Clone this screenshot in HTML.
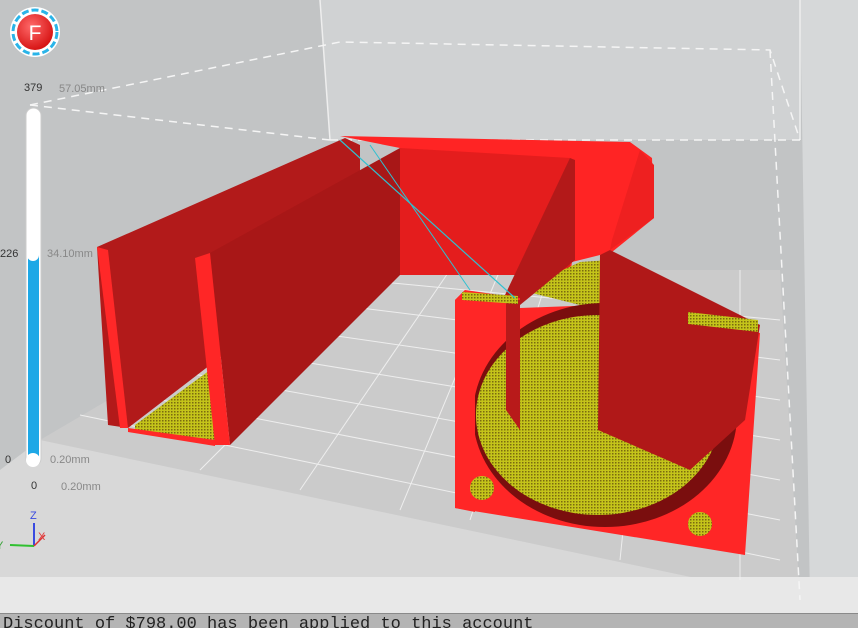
<!DOCTYPE html>
<html><head><meta charset="utf-8"><style>
html,body{margin:0;padding:0;width:858px;height:627px;overflow:hidden;background:#c2c4c5;font-family:"Liberation Sans",sans-serif}
svg{position:absolute;left:0;top:0}
.status{position:absolute;left:0;top:613px;width:858px;height:14px;background:#b4b4b4;border-top:1px solid #8a8a8a;font-family:"Liberation Mono",monospace;font-size:17px;line-height:22px;color:#222;padding-left:3px;overflow:hidden;white-space:nowrap}
.lbl{position:absolute;font-size:11px;color:#333}
.lbl2{position:absolute;font-size:11px;color:#888}
</style></head><body>
<svg width="858" height="627" viewBox="0 0 858 627">
<defs>
<radialGradient id="rg" cx="0.4" cy="0.35" r="0.7"><stop offset="0" stop-color="#ff6a6a"/><stop offset="1" stop-color="#d40e0e"/></radialGradient>
<pattern id="ye" width="3" height="3" patternUnits="userSpaceOnUse"><rect width="3" height="3" fill="#c4c41a"/><rect width="1.5" height="1.5" fill="#7a6a10"/></pattern>
</defs>
<!-- back room -->
<rect x="0" y="0" width="858" height="627" fill="#c2c4c5"/>
<polygon points="320,0 800,0 800,140 330,140" fill="#d0d2d3"/>
<polygon points="800,0 858,0 858,610 810,600" fill="#d6d8d9"/>
<line x1="320" y1="0" x2="330" y2="140" stroke="#eee" stroke-width="1.5"/>
<line x1="800" y1="0" x2="800" y2="140" stroke="#eee" stroke-width="1.5"/>
<!-- bed -->
<polygon points="40,440 330,270 780,270 800,600 0,590 0,470" fill="#cbcbcb"/>
<polygon points="0,470 40,440 800,600 810,600 0,600" fill="#d8d8d8"/>
<rect x="0" y="577" width="858" height="36" fill="#e8e8e8"/>
<g stroke="#f2f2f2" stroke-width="1" opacity="0.9">
<line x1="80" y1="415" x2="780" y2="560"/><line x1="120" y1="392" x2="780" y2="520"/><line x1="160" y1="368" x2="780" y2="480"/><line x1="200" y1="345" x2="780" y2="440"/><line x1="240" y1="322" x2="780" y2="400"/><line x1="280" y1="298" x2="780" y2="360"/><line x1="320" y1="276" x2="780" y2="320"/>
<line x1="200" y1="470" x2="400" y2="270"/><line x1="300" y1="490" x2="450" y2="270"/><line x1="400" y1="510" x2="500" y2="270"/><line x1="470" y1="520" x2="550" y2="270"/><line x1="620" y1="560" x2="650" y2="270"/><line x1="740" y1="580" x2="740" y2="270"/>
</g>
<g fill="none" stroke="#f5f5f5" stroke-width="1.5" stroke-dasharray="8,6">
<polyline points="30,105 340,42 770,50 800,140"/>
<polyline points="30,105 330,140"/>
<polyline points="770,50 800,600"/>
<polyline points="330,140 800,140"/>
</g>
<!-- left part -->
<polygon points="97,247 345,138 360,145 360,250 128,428 108,425" fill="#b21a1a"/>
<polygon points="97,247 108,250 128,428 120,428" fill="#ff2828"/>
<polygon points="135,425 210,370 215,440 135,430" fill="url(#ye)"/>
<polygon points="128,428 215,440 215,446 128,432" fill="#ff2828"/>
<polygon points="210,253 400,148 400,275 230,445" fill="#a81717"/>
<polygon points="195,258 210,253 230,445 215,445" fill="#ff2626"/>
<!-- back wall -->
<polygon points="340,136 630,142 652,158 654,218 612,252 572,262 570,275 400,275 400,148" fill="#ff2424"/>
<polygon points="400,148 570,158 570,275 400,275" fill="#e41d1d"/>
<polygon points="610,250 654,218 654,165 640,150 612,240" fill="#ee2020"/>
<!-- right part back floor -->
<polygon points="520,290 580,262 610,260 760,325 600,310" fill="url(#ye)"/>
<!-- divider -->
<polygon points="505,295 570,158 575,160 575,260 520,305" fill="#b31919"/>
<!-- front box -->
<polygon points="455,300 465,290 520,298 520,308 600,305 760,333 745,555 455,508" fill="#ff2626"/>
<ellipse cx="605" cy="415" rx="132" ry="112" fill="#7a0e0e"/>
<ellipse cx="598" cy="415" rx="122" ry="100" fill="url(#ye)"/>
<polygon points="600,255 610,250 760,325 745,420 690,470 598,430" fill="#b01818"/>
<polygon points="506,300 520,300 520,430 506,410" fill="#b81a1a"/>
<polygon points="475,300 465,290 455,300 455,508 475,512" fill="#ff2626"/>
<polygon points="688,312 758,320 758,332 688,324" fill="url(#ye)"/>
<polygon points="462,292 518,296 518,304 462,300" fill="url(#ye)"/>
<circle cx="482" cy="488" r="12" fill="url(#ye)"/>
<circle cx="700" cy="524" r="12" fill="url(#ye)"/>
<line x1="340" y1="140" x2="515" y2="298" stroke="#30c0d0" stroke-width="1.2"/>
<line x1="370" y1="145" x2="470" y2="290" stroke="#30c0d0" stroke-width="1"/>
<!-- logo -->
<circle cx="35" cy="32" r="25" fill="#fff"/>
<circle cx="35" cy="32" r="22" fill="none" stroke="#2ab4e8" stroke-width="3" stroke-dasharray="7,3"/>
<circle cx="35" cy="32" r="18" fill="url(#rg)"/>
<text x="35" y="40" font-family="Liberation Sans" font-size="21" fill="#fff" text-anchor="middle">F</text>
<!-- slider -->
<rect x="26" y="108" width="15" height="358" rx="7.5" fill="#fff" stroke="#ccc"/>
<rect x="28" y="255" width="11" height="205" fill="#1ea8e6"/>
<circle cx="33" cy="255" r="6" fill="#fff"/>
<circle cx="33" cy="460" r="7" fill="#fff"/>
<!-- axes -->
<line x1="34" y1="546" x2="34" y2="523" stroke="#3a4ae0" stroke-width="2"/>
<line x1="34" y1="546" x2="10" y2="545" stroke="#30c030" stroke-width="2"/>
<line x1="34" y1="546" x2="45" y2="535" stroke="#e03030" stroke-width="1.5"/>
<text x="30" y="519" font-size="11" fill="#3a4ae0" font-family="Liberation Sans">Z</text>
<text x="38" y="540" font-size="11" fill="#e04040" font-family="Liberation Sans">X</text>
<text x="-4" y="549" font-size="11" fill="#30a030" font-family="Liberation Sans">Y</text>
</svg>
<div class="lbl" style="left:24px;top:82px">379</div><div class="lbl2" style="left:59px;top:83px">57.05mm</div>
<div class="lbl" style="left:0px;top:248px">226</div><div class="lbl2" style="left:47px;top:248px">34.10mm</div>
<div class="lbl" style="left:5px;top:454px">0</div><div class="lbl2" style="left:50px;top:454px">0.20mm</div>
<div class="lbl" style="left:31px;top:480px">0</div><div class="lbl2" style="left:61px;top:481px">0.20mm</div>
<div class="status">Discount of $798.00 has been applied to this account</div>
</body></html>
